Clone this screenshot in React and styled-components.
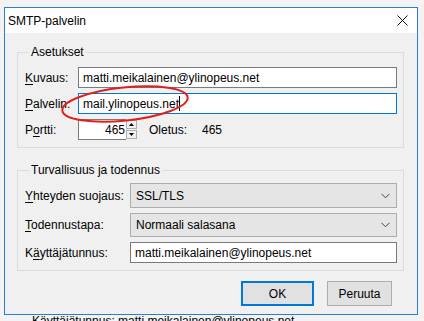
import React from "react";
import styled, { createGlobalStyle } from "styled-components";

const Global = createGlobalStyle`
  html, body { margin: 0; padding: 0; height: 321px; overflow: hidden; background: #f3f3f3; }
  body { font-family: "Liberation Sans", Arial, sans-serif; font-size: 12px; color: #000; }
  * { box-sizing: border-box; }
`;

const Page = styled.div`
  padding: 7px 6px 0 4px;
  position: relative;
`;

const Window = styled.div`
  width: 414px;
  height: 308px;
  border: 1px solid #2b7fd2;
  background: #f0f0f0;
  display: flex;
  flex-direction: column;
`;

const TitleBar = styled.div`
  height: 25px;
  background: #fff;
  display: flex;
  align-items: center;
  justify-content: space-between;
  padding: 0 9px 0 3px;
  font-size: 12px;
`;

const Body = styled.div`
  padding: 11px 13px 0 12px;
  display: flex;
  flex-direction: column;
`;

const Group = styled.fieldset`
  margin: 0 0 ${(p) => p.$mb || 0}px 0;
  padding: ${(p) => p.$pt}px 6px ${(p) => p.$pb}px 7px;
  border: 1px solid #dcdcdc;
  display: flex;
  flex-direction: column;
  gap: ${(p) => p.$gap || 5}px;
  min-width: 0;
`;

const Legend = styled.legend`
  margin-left: 4px;
  padding: 0 2px;
  line-height: 16px;
  font-size: 12px;
`;

const Row = styled.div`
  display: flex;
  align-items: center;
`;

const Label = styled.label`
  width: ${(p) => p.$w}px;
  flex: none;
  white-space: nowrap;
  line-height: 16px;
`;

const U = styled.span`
  text-decoration: underline;
  text-underline-offset: 2px;
`;

const TextInput = styled.div`
  flex: 1;
  height: 21px;
  border: 1px solid ${(p) => (p.$focus ? "#0078d7" : "#7a7a7a")};
  background: #fff;
  padding: 0 4px;
  display: flex;
  align-items: center;
  white-space: nowrap;
`;

const Caret = styled.span`
  display: inline-block;
  width: 1px;
  height: 15px;
  background: #000;
  margin-left: 0px;
`;

const SpinWrap = styled.div`
  display: flex;
  align-items: stretch;
  height: 21px;
`;

const SpinInput = styled.div`
  width: 48px;
  border: 1px solid #7a7a7a;
  border-right: none;
  background: #fff;
  display: flex;
  align-items: center;
  justify-content: flex-end;
  padding-right: 1px;
`;

const SpinButtons = styled.div`
  width: 11px;
  display: flex;
  flex-direction: column;
  gap: 1px;
  padding: 1px 0;
`;

const SpinBtn = styled.div`
  flex: 1;
  border: 1px solid #adadad;
  background: #f0f0f0;
  display: flex;
  align-items: center;
  justify-content: center;
`;

const Default = styled.span`
  margin-left: 12px;
  display: flex;
  gap: 15px;
`;

const Select = styled.div`
  flex: 1;
  height: ${(p) => p.$h}px;
  border: 1px solid #adadad;
  background: #e5e5e5;
  display: flex;
  align-items: center;
  justify-content: space-between;
  padding: 0 6px 0 5px;
`;

const Buttons = styled.div`
  display: flex;
  justify-content: flex-end;
  gap: 13px;
  padding: 10px 12px 0 0;
`;

const Button = styled.div`
  width: ${(p) => p.$w}px;
  height: 25px;
  border: ${(p) => (p.$default ? "2px solid #0078d7" : "1px solid #adadad")};
  background: #e1e1e1;
  display: flex;
  align-items: center;
  justify-content: center;
`;

const BehindText = styled.div`
  padding: 0 0 0 28px;
  margin-top: -2px;
  line-height: 16px;
  white-space: nowrap;
`;

const Annotation = styled.svg`
  position: absolute;
  left: 0;
  top: 0;
  pointer-events: none;
`;

const Chevron = () => (
  <svg width="9" height="6" viewBox="0 0 9 6">
    <path d="M0.5 0.8 L4.5 4.8 L8.5 0.8" fill="none" stroke="#444" strokeWidth="1" />
  </svg>
);

const Tri = ({ up }) => (
  <svg width="5" height="3" viewBox="0 0 5 3">
    <path d={up ? "M0 3 L2.5 0 L5 3 Z" : "M0 0 L5 0 L2.5 3 Z"} fill="#000" />
  </svg>
);

export default function App() {
  return (
    <>
      <Global />
      <Page>
        <Window>
          <TitleBar>
            <span>SMTP-palvelin</span>
            <svg width="11" height="11" viewBox="0 0 11 11">
              <path d="M0.5 0.5 L10.5 10.5 M10.5 0.5 L0.5 10.5" stroke="#111" strokeWidth="1" />
            </svg>
          </TitleBar>
          <Body>
            <Group $pt={7} $pb={7} $mb={14} $gap={5}>
              <Legend>Asetukset</Legend>
              <Row>
                <Label $w={53}><U>K</U>uvaus:</Label>
                <TextInput>matti.meikalainen@ylinopeus.net</TextInput>
              </Row>
              <Row>
                <Label $w={53}><U>P</U>alvelin:</Label>
                <TextInput $focus>mail.ylinopeus.net<Caret /></TextInput>
              </Row>
              <Row>
                <Label $w={53}>P<U>o</U>rtti:</Label>
                <SpinWrap>
                  <SpinInput>465</SpinInput>
                  <SpinButtons>
                    <SpinBtn><Tri up /></SpinBtn>
                    <SpinBtn><Tri /></SpinBtn>
                  </SpinButtons>
                </SpinWrap>
                <Default>
                  <span>Oletus:</span>
                  <span>465</span>
                </Default>
              </Row>
            </Group>
            <Group $pt={5} $pb={7} $gap={5}>
              <Legend>Turvallisuus ja todennus</Legend>
              <Row>
                <Label $w={105}><U>Y</U>hteyden suojaus:</Label>
                <Select $h={25}>
                  <span>SSL/TLS</span>
                  <Chevron />
                </Select>
              </Row>
              <Row>
                <Label $w={105}><U>T</U>odennustapa:</Label>
                <Select $h={24}>
                  <span>Normaali salasana</span>
                  <Chevron />
                </Select>
              </Row>
              <Row>
                <Label $w={105}>K<U>ä</U>yttäjätunnus:</Label>
                <TextInput>matti.meikalainen@ylinopeus.net</TextInput>
              </Row>
            </Group>
            <Buttons>
              <Button $w={73} $default>OK</Button>
              <Button $w={65}>Peruuta</Button>
            </Buttons>
          </Body>
        </Window>
        <BehindText>Käyttäjätunnus: matti.meikalainen@ylinopeus.net</BehindText>
        <Annotation width="424" height="321" viewBox="0 0 424 321">
          <ellipse cx="125" cy="104" rx="63" ry="16.5" transform="rotate(-6 125 104)" fill="none" stroke="#e0201b" strokeWidth="2" />
        </Annotation>
      </Page>
    </>
  );
}
